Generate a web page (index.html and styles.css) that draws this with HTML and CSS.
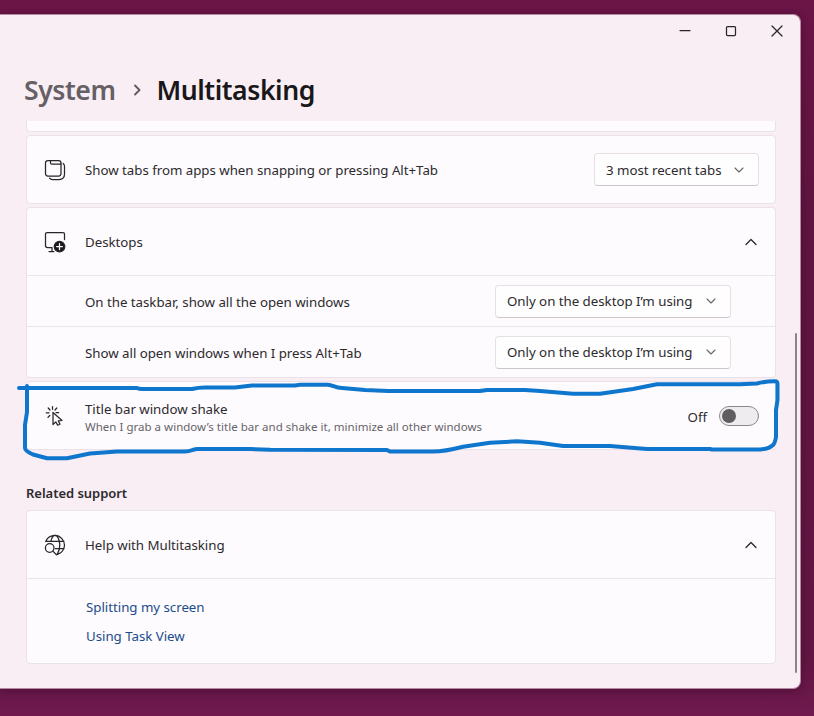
FILE: index.html
```html
<!DOCTYPE html>
<html lang="en">
<head>
<meta charset="utf-8">
<title>Multitasking</title>
<link rel="stylesheet" href="styles.css">
</head>
<body>
<main class="window">
  <header class="titlebar">
    <svg width="12" height="12"><path d="M1 5.5H11"/></svg>
    <svg width="12" height="12"><rect x="1.5" y="1.5" width="9" height="9" rx="1"/></svg>
    <svg width="12" height="12"><path d="M1 1L11 11M11 1L1 11"/></svg>
  </header>
  <h1 class="breadcrumb">
    <span class="parent">System</span>
    <svg width="10" height="14"><path d="M3 2.5L7.5 7L3 11.5"/></svg>
    <span class="current">Multitasking</span>
  </h1>
  <div class="content">
    <section class="card clipped"></section>
    <section class="card">
      <div class="row head">
        <svg class="icon" width="22" height="22" viewBox="0 0 22 22"><rect x="1.5" y="1.5" width="15.500" height="15.500" rx="2.500"/><path d="M6.500 1.500V4Q6.500 5.200 7.700 5.200H17M19.200 4.500Q20.500 5.500 20.500 7.500V15Q20.500 20.500 15 20.500H8.500Q6.500 20.500 5.500 19.200"/></svg>
        <span class="label">Show tabs from apps when snapping or pressing Alt+Tab</span>
        <div class="select small"><span>3 most recent tabs</span><svg width="10" height="10"><path d="M1 3L5 7L9 3"/></svg></div>
      </div>
    </section>
    <section class="card">
      <div class="row head">
        <svg class="icon" width="22" height="22" viewBox="0 0 22 22"><path d="M20.500 8.500V3Q20.500 1.500 19 1.500H3Q1.500 1.500 1.500 3V14.500Q1.500 16.500 3.500 16.500H8M8 16.500V20.500M5 20.500H10"/><circle class="solid" cx="15.500" cy="15.600" r="5.300"/><path class="plus" d="M15.500 12.700V18.500M12.600 15.600H18.400"/></svg>
        <span class="label">Desktops</span>
        <svg class="chevron" width="12" height="8"><path d="M1 6.500L6 1.500L11 6.500"/></svg>
      </div>
      <div class="row sub">
        <span class="label">On the taskbar, show all the open windows</span>
        <div class="select"><span>Only on the desktop I’m using</span><svg width="10" height="10"><path d="M1 3L5 7L9 3"/></svg></div>
      </div>
      <div class="row sub">
        <span class="label">Show all open windows when I press Alt+Tab</span>
        <div class="select"><span>Only on the desktop I’m using</span><svg width="10" height="10"><path d="M1 3L5 7L9 3"/></svg></div>
      </div>
    </section>
    <section class="card">
      <div class="row head">
        <svg class="icon" width="22" height="22" viewBox="0 0 22 22"><path d="M9 7.500V19.500L11.800 16.900L13.700 20.300L16 19.300L14.300 15.900L18 15.500Z"/><path d="M8.500 1.500V4.300M4.200 3L6 5M12.800 3L11 5M2.300 7.800H5M12 7.500H14.700M5.800 10.500L4 12.300"/></svg>
        <div class="label stack"><span>Title bar window shake</span><small>When I grab a window’s title bar and shake it, minimize all other windows</small></div>
        <span class="state">Off</span>
        <span class="toggle"></span>
      </div>
    </section>
    <h2>Related support</h2>
    <section class="card help">
      <div class="row head">
        <svg class="icon" width="22" height="22" viewBox="0 0 22 22"><path d="M1.700 7.500A9.700 9.700 0 1 1 13.500 20.400M2 7.300H20M11.500 14.700H20M6.800 7.300C7.700 3.500 9.500 1.300 11.200 1.300S15.800 5 15.800 11S14 18.500 13 20.400"/><circle cx="5.700" cy="14" r="4.300"/><path d="M8.800 17.100L12.500 20.800"/></svg>
        <span class="label">Help with Multitasking</span>
        <svg class="chevron" width="12" height="8"><path d="M1 6.500L6 1.500L11 6.500"/></svg>
      </div>
      <nav class="links"><a>Splitting my screen</a><a>Using Task View</a></nav>
    </section>
  </div>
  <div class="scrollbar"></div>
</main>
<svg class="ink" width="814" height="716"><path d="M19 388H137Q139 389 142 389H192Q198 387.500 205 387.500H235L252 385.500H295L300 384.700H328C333 385 335 388 342 388L365 390L388 391H480L487 390H525L540 391L573 393.700H600L633 389L657 384.300H740L757 383.500C764 381.500 770 381.300 775 381.300Q777.500 381.300 777.500 384V400L776 410V437Q775 443 773 445Q769 449 760 449.500H712L710 449H647L610 446H563L540 442.700L517 441.300L490 442.700L463 446.700C450 450 443 451.500 433 451.500H390L387 450L270 449.700L250 449H197C191 449.500 192 451.500 185 451.500H117L90 453.500L67 458.300H47L33 454.500Q25 451 25 448V425L27 412V386"/></svg>
</body>
</html>
```
FILE: styles.css
```css
* { box-sizing: border-box; }
body { margin: 0; width: 814px; height: 716px; overflow: hidden; padding-top: 14px; position: relative; background: linear-gradient(#6a1546, #5f1541 30%, #611643 92%, #70194f); font: 13.300px/20px "Noto Sans", "Open Sans", sans-serif; letter-spacing: -.03px; color: #2d2a2e; }
svg { fill: none; stroke: #29262a; stroke-width: 1.25; stroke-linecap: round; stroke-linejoin: round; flex: none; }
.window { position: relative; width: 801px; height: 675px; background: #f8eef4; border: 1px solid #b58ba4; border-left: 0; border-radius: 0 8px 8px 0; box-shadow: 0 2px 10px #2b061c66; }
.titlebar { height: 32px; display: flex; justify-content: flex-end; align-items: center; gap: 34px; padding-right: 17px; }
.breadcrumb { margin: 0; height: 74px; display: flex; align-items: center; padding: 12px 0 0 24px; font-size: 26.600px; letter-spacing: -.45px; font-weight: 600; line-height: 38px; color: #19171a; }
.breadcrumb svg { margin: 0 14.500px 0 18px; stroke: #5e585d; stroke-width: 1.8; }
.parent { color: #665f65; width: 90px; }
.content { width: 776px; padding-left: 26px; }
.card { width: 750px; background: #fdfbfd; border: 1px solid #ebe1e8; border-radius: 4px; margin-bottom: 3px; }
.clipped { height: 11px; border-top: 0; border-radius: 0 0 4px 4px; }
.row { display: flex; align-items: center; }
.head { height: 67px; padding: 0 16px 0 17px; }
.sub { height: 51px; border-top: 1px solid #e9e5e9; padding: 0 44px 0 58px; }
.sub .label { padding-top: 2px; }
.head > .label { padding-top: 1px; }
.icon { margin-right: 19px; }
.label { flex: 1; white-space: nowrap; }
.stack { display: flex; flex-direction: column; line-height: 18px; }
.head > .stack { padding-top: 3px; }
.state { padding-top: 2px; }
small { font-size: 11.500px; letter-spacing: .02px; line-height: 17px; color: #67636a; }
.select { width: 236px; height: 33px; display: flex; align-items: center; justify-content: space-between; padding: 0 14px 0 11px; background: #fefefe; border: 1px solid #e6e0e5; border-bottom-color: #cdc7cc; border-radius: 4px; white-space: nowrap; }
.select.small { width: 165px; }
.select svg { stroke: #6a666a; stroke-width: 1.1; }
.chevron { margin-right: 2px; }
.solid { fill: #1c191d; }
.plus { stroke: #fff; }
.toggle { width: 40px; height: 20px; border: 1px solid #8c888c; border-radius: 10px; background: #efecef; padding: 2px; margin-left: 12px; }
.toggle::before { content: ""; display: block; width: 14px; height: 14px; border-radius: 50%; background: #605d60; }
h2 { margin: 33px 0 7px; font-size: 13px; letter-spacing: -.03px; font-weight: 600; line-height: 20px; }
.help { height: 154px; }
.links { border-top: 1px solid #e9e5e9; padding: 18px 0 0 59px; display: flex; flex-direction: column; align-items: flex-start; gap: 9px; color: #1c4b8c; }
.scrollbar { position: absolute; right: 3px; top: 318px; width: 2px; height: 340px; background: #8b8389; border-radius: 1px; }
.ink { position: absolute; left: 0; top: 0; stroke: #0f76cd; stroke-width: 4; }
```
